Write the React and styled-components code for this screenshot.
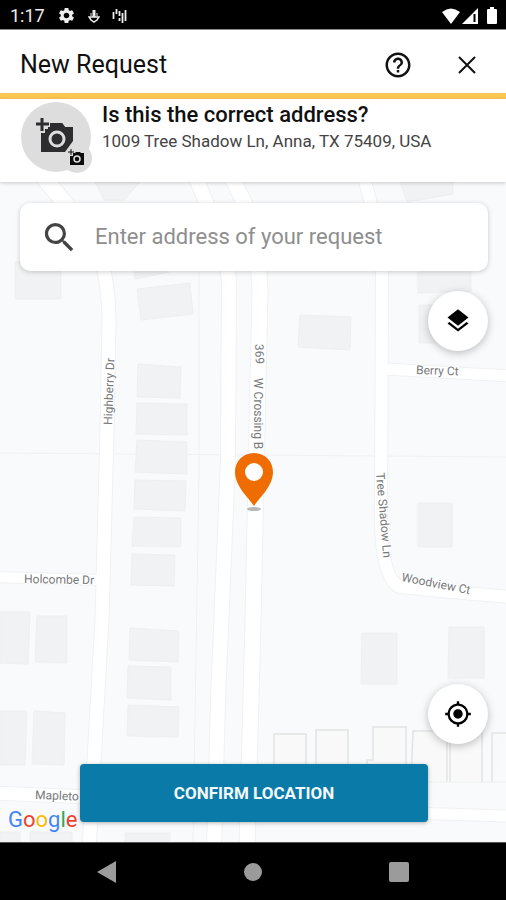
import React, { useState } from 'react';
import styled, { createGlobalStyle } from 'styled-components';
import {
  MdHelpOutline,
  MdLayers,
  MdMyLocation,
  MdSearch,
  MdSettings,
} from 'react-icons/md';

const GlobalStyle = createGlobalStyle`
  * {
    box-sizing: border-box;
  }
  body {
    margin: 0;
    background-color: #ffffff;
    font-family: Roboto, 'Liberation Sans', sans-serif;
  }
  button,
  input {
    font-family: inherit;
  }
  svg {
    display: block;
  }
`;

const Screen = styled.div`
  display: flex;
  flex-direction: column;
  width: 100%;
  min-height: 100vh;
`;

const StatusBar = styled.div`
  display: flex;
  justify-content: space-between;
  align-items: center;
  height: 30px;
  padding: 2px 8px 0 10px;
  background-color: #000000;
  border-bottom: 1px solid #8a8a8a;
  color: #ededed;

  .status-left {
    display: flex;
    align-items: center;
    gap: 12px;
  }
  .status-right {
    display: flex;
    align-items: center;
    gap: 2px;
  }
  .time {
    font-size: 18px;
    line-height: 28px;
  }
`;

const Header = styled.header`
  display: flex;
  align-items: center;
  justify-content: space-between;
  height: 69px;
  padding: 6px 24px 0 20px;
  border-bottom: 6px solid #fec751;

  h1 {
    margin: 0;
    font-size: 25px;
    font-weight: 400;
    line-height: 32px;
    color: #111111;
  }
  .header-actions {
    display: flex;
    gap: 39px;
  }
`;

const IconButton = styled.button`
  display: flex;
  padding: 0;
  border: none;
  background: none;
  color: #111111;
  cursor: pointer;
`;

const AddressCard = styled.section`
  position: relative;
  display: flex;
  gap: 10px;
  height: 83px;
  padding: 2px 20px 0;
  background-color: #ffffff;
  box-shadow: 0 1px 4px rgba(0, 0, 0, 0.2);
  z-index: 1;

  h2 {
    margin: 0;
    font-size: 22px;
    font-weight: 500;
    line-height: 28px;
    color: #111111;
  }
  p {
    margin: 0;
    font-size: 17px;
    line-height: 24px;
    color: #444444;
  }
`;

const MapArea = styled.main`
  position: relative;
  display: flex;
  flex: 1;
  flex-direction: column;
  padding: 21px 18px 20px 20px;
  overflow: hidden;
`;

const MapCanvas = styled.svg`
  position: absolute;
  inset: 0;
  width: 100%;
  height: 100%;
`;

const SearchBox = styled.label`
  position: relative;
  display: flex;
  align-items: center;
  gap: 16px;
  height: 68px;
  padding: 0 20px;
  border-radius: 10px;
  background-color: #ffffff;
  box-shadow: 0 1px 5px rgba(0, 0, 0, 0.2);
  color: #444444;

  input {
    flex: 1;
    min-width: 0;
    padding: 0;
    border: none;
    outline: none;
    background: none;
    font-size: 22px;
    line-height: 32px;
    color: #222222;
    &::placeholder {
      color: #8e8e8e;
      opacity: 1;
    }
  }
`;

const RoundButton = styled.button`
  position: relative;
  display: flex;
  justify-content: center;
  align-items: center;
  align-self: flex-end;
  width: 60px;
  height: 60px;
  margin-top: ${({ $bottom }) => ($bottom ? 'auto' : '20px')};
  margin-bottom: ${({ $bottom }) => ($bottom ? '20px' : '0')};
  padding: 0;
  border: none;
  border-radius: 50%;
  background-color: #ffffff;
  box-shadow: 0 2px 8px rgba(0, 0, 0, 0.25);
  color: #000000;
  cursor: pointer;
`;

const ConfirmButton = styled.button`
  position: relative;
  height: 58px;
  margin: 0 60px;
  padding: 0;
  border: none;
  border-radius: 4px;
  background-color: #0a7aa8;
  box-shadow: 0 1px 4px rgba(0, 0, 0, 0.3);
  font-size: 17px;
  font-weight: 700;
  line-height: 24px;
  color: #f4f9fb;
  cursor: pointer;
`;

// the tip of the pin stands on the centre of the map
const Pin = styled.svg`
  position: absolute;
  left: 50%;
  bottom: 50%;
  transform: translateX(-50%);
`;

const Attribution = styled.div`
  position: absolute;
  left: 8px;
  bottom: 8px;
  font-size: 22px;
  line-height: 28px;
`;

const Letter = styled.span`
  color: ${({ $color }) => $color};
`;

const NavBar = styled.nav`
  display: flex;
  justify-content: center;
  align-items: center;
  gap: 126px;
  height: 58px;
  border-top: 1px solid #555555;
  background-color: #000000;

  button {
    color: #9b9b9b;
  }
`;

const BUILDINGS = [
  'M15 262h46v37H15z',
  'M95 182h45l-16 18h-20z',
  'M137 289l53-6 3 31-52 6z',
  'M134 272h35l-34 7z',
  'M138 364l43 3-1 31-43-1z',
  'M137 403l50 1v31l-51-1z',
  'M137 440l50 2v32l-52-2z',
  'M135 480l51 1-1 30-51-2z',
  'M134 517l47 1v29l-49-1z',
  'M132 554l43 1-1 31-43-1z',
  'M130 628l49 3-1 31-49-2z',
  'M128 666l43 1v33l-44-2z',
  'M128 705l51 2-1 30-51-1z',
  'M0 612h30l-2 52-28-1z',
  'M37 616h30v47l-32-1z',
  'M0 711h27l-2 54H0z',
  'M34 711l31 2-1 52-32-1z',
  'M0 832h20v10H0z',
  'M30 832h42v10H30z',
  'M125 833h45v9h-45z',
  'M300 315l51 2-1 33-52-3z',
  'M400 182h53v12l-46 8z',
  'M418 272h53v19l-53 2z',
  'M419 305h40v38h-40z',
  'M418 503h34v44h-34z',
  'M362 633h35v51h-36z',
  'M449 627h35v51h-36z',
];

const LOTS = [
  'M274 765v-31h32v31',
  'M316 765v-35h32v35',
  'M367 765v-5h6v-33h33v38',
  'M411 782l2-51h34v51',
  'M450 782v-50h32v50',
  'M492 782v-49h14',
];

const ROADS = [
  { d: 'M44 178L108 256', width: 16 },
  { d: 'M102 262Q109 290 109 320L107 430L102 620L89 850', width: 13 },
  { d: 'M196 178L206 202Q228 250 229 285L228 460L218 700L214 850', width: 14 },
  { d: 'M232 178L244 202Q259 250 260 290L257 430L253 620L247 850', width: 15 },
  { d: 'M364 178Q382 240 382 275L381 520Q382 580 400 587Q450 592 510 597', width: 12 },
  { d: 'M385 369L510 376', width: 11 },
  { d: 'M-5 577L102 580', width: 10 },
  { d: 'M-5 793L90 797', width: 13 },
  { d: 'M410 813L510 816', width: 11 },
];

const LABELS = [
  { text: 'Highberry Dr', x: 112, y: 425, turn: -88 },
  { text: '369', x: 255, y: 344, turn: 88 },
  { text: 'W Crossing B', x: 254, y: 378, turn: 90 },
  { text: 'Tree Shadow Ln', x: 376, y: 473, turn: 85 },
  { text: 'Berry Ct', x: 416, y: 374, turn: 2 },
  { text: 'Woodview Ct', x: 401, y: 581, turn: 11 },
  { text: 'Holcombe Dr', x: 24, y: 583, turn: 1 },
  { text: 'Mapleto', x: 35, y: 799, turn: 2 },
];

const StreetMap = () => (
  <MapCanvas viewBox="0 182 506 660" preserveAspectRatio="xMidYMid slice" aria-hidden="true">
    <rect x="-500" y="-500" width="1500" height="2000" fill="#f8fafb" />
    <path d="M0 453L506 457M199 272v200l-6 370" stroke="#eff1f3" fill="none" />
    {BUILDINGS.map((d) => (
      <path key={d} d={d} fill="#f1f2f3" stroke="#eeeff0" />
    ))}
    {LOTS.map((d) => (
      <path key={d} d={d} fill="#f9f9f9" stroke="#e2e3e4" strokeWidth="1.5" />
    ))}
    <path d="M425 782h81" stroke="#eeeff0" />
    {ROADS.map(({ d, width }) => (
      <path key={d} d={d} fill="none" stroke="#f0f1f2" strokeWidth={width + 2} />
    ))}
    {ROADS.map(({ d, width }) => (
      <path key={d} d={d} fill="none" stroke="#ffffff" strokeWidth={width} />
    ))}
    {LABELS.map(({ text, x, y, turn }) => (
      <text
        key={text}
        fontSize="12"
        fill="#77797b"
        stroke="#ffffff"
        strokeWidth="2"
        paintOrder="stroke"
        transform={`translate(${x} ${y}) rotate(${turn})`}
      >
        {text}
      </text>
    ))}
  </MapCanvas>
);

const CameraAvatar = () => (
  <svg width="72" height="74" viewBox="0 0 72 74" aria-hidden="true">
    <circle cx="36" cy="36" r="35" fill="#dddddd" />
    <circle cx="57" cy="57" r="15" fill="#dddddd" />
    <path d="M28 22H42L45 26H53V40L45 51H21V28H28z" fill="#2d2d2f" />
    <path d="M22 14V32M13 23H31" stroke="#dddddd" strokeWidth="6" />
    <path d="M22 17V30M16 23H29" stroke="#2d2d2f" strokeWidth="3" />
    <path d="M30 22H42L45 26V30H30z" fill="#2d2d2f" />
    <circle cx="37" cy="38" r="7" fill="#2d2d2f" stroke="#dddddd" strokeWidth="3" />
    <path d="M53 52H55L56 51H60L61 52H64V64H50V55H53z" fill="#0c0c0c" />
    <path d="M51 48V54M48 51H54" stroke="#0c0c0c" />
    <circle cx="57" cy="58" r="3" fill="#0c0c0c" stroke="#dddddd" strokeWidth="1.5" />
  </svg>
);

const App = () => {
  const [address, setAddress] = useState('');

  const onChangeAddress = (e) => {
    setAddress(e.target.value);
  };

  return (
    <Screen>
      <GlobalStyle />
      <StatusBar>
        <div className="status-left">
          <span className="time">1:17</span>
          <MdSettings size={19} />
          <svg width="12" height="16" viewBox="0 0 12 16" fill="none" stroke="currentColor">
            <path d="M6 2v7" strokeWidth="3" />
            <path d="M3 5v3M9 5v3" strokeWidth="1" />
            <path d="M1 9h10L9 12 6 14 3 12z" strokeWidth="1.5" />
          </svg>
          <svg width="15" height="16" viewBox="0 0 15 16" stroke="currentColor" strokeWidth="1.8">
            <path d="M1.5 4v7M4.5 1v5M7.5 3v5M7.5 10v3M10.5 5v10M13.5 2v11" />
          </svg>
        </div>
        <div className="status-right">
          <svg width="18" height="16" viewBox="0 0 18 16" fill="#ffffff">
            <path d="M0 4Q9 -3 18 4L9 16z" />
          </svg>
          <svg width="16" height="16" viewBox="0 0 16 16" fill="#ffffff">
            <path d="M0 16L16 0v16z" />
            <path d="M12.5 6v8" stroke="#000000" strokeWidth="2" />
          </svg>
          <svg width="18" height="17" viewBox="0 0 18 17" fill="#ffffff">
            <path d="M10 0h4v2h2q1 0 1 1v13q0 1-1 1H8q-1 0-1-1V3q0-1 1-1h2z" />
          </svg>
        </div>
      </StatusBar>

      <Header>
        <h1>New Request</h1>
        <div className="header-actions">
          <IconButton type="button" aria-label="Help">
            <MdHelpOutline size={30} />
          </IconButton>
          <IconButton type="button" aria-label="Close">
            <svg width="30" height="30" viewBox="0 0 30 30" stroke="currentColor" strokeWidth="2">
              <path d="M7 7L23 23M23 7L7 23" />
            </svg>
          </IconButton>
        </div>
      </Header>

      <AddressCard>
        <CameraAvatar />
        <div>
          <h2>Is this the correct address?</h2>
          <p>1009 Tree Shadow Ln, Anna, TX 75409, USA</p>
        </div>
      </AddressCard>

      <MapArea>
        <StreetMap />
        <Attribution>
          <Letter $color="#4285f4">G</Letter>
          <Letter $color="#ea4335">o</Letter>
          <Letter $color="#fbbc05">o</Letter>
          <Letter $color="#4285f4">g</Letter>
          <Letter $color="#34a853">l</Letter>
          <Letter $color="#ea4335">e</Letter>
        </Attribution>
        <Pin width="40" height="60" viewBox="0 0 40 60" aria-hidden="true">
          <ellipse cx="21" cy="57" rx="7" ry="2" fill="#b5b7b8" />
          <path
            d="M21 1C10 1 2 9.5 2 20C2 34 15 45 21 54C27 45 40 34 40 20C40 9.5 32 1 21 1z"
            fill="#ef6c00"
          />
          <circle cx="21" cy="20" r="9" fill="#ffffff" />
        </Pin>
        <SearchBox>
          <MdSearch size={39} />
          <input
            type="text"
            name="address"
            placeholder="Enter address of your request"
            aria-label="Enter address of your request"
            value={address}
            onChange={onChangeAddress}
          />
        </SearchBox>
        <RoundButton type="button" aria-label="Map layers">
          <MdLayers size={28} />
        </RoundButton>
        <RoundButton type="button" aria-label="My location" $bottom>
          <MdMyLocation size={28} />
        </RoundButton>
        <ConfirmButton type="button">CONFIRM LOCATION</ConfirmButton>
      </MapArea>

      <NavBar>
        <IconButton type="button" aria-label="Back">
          <svg width="20" height="22" viewBox="0 0 20 22" fill="currentColor">
            <path d="M0 11L19 0v22z" />
          </svg>
        </IconButton>
        <IconButton type="button" aria-label="Home">
          <svg width="20" height="20" viewBox="0 0 20 20" fill="currentColor">
            <circle cx="10" cy="10" r="9" />
          </svg>
        </IconButton>
        <IconButton type="button" aria-label="Recent apps">
          <svg width="20" height="20" viewBox="0 0 20 20" fill="currentColor">
            <rect width="20" height="20" rx="2" />
          </svg>
        </IconButton>
      </NavBar>
    </Screen>
  );
};

export default App;
